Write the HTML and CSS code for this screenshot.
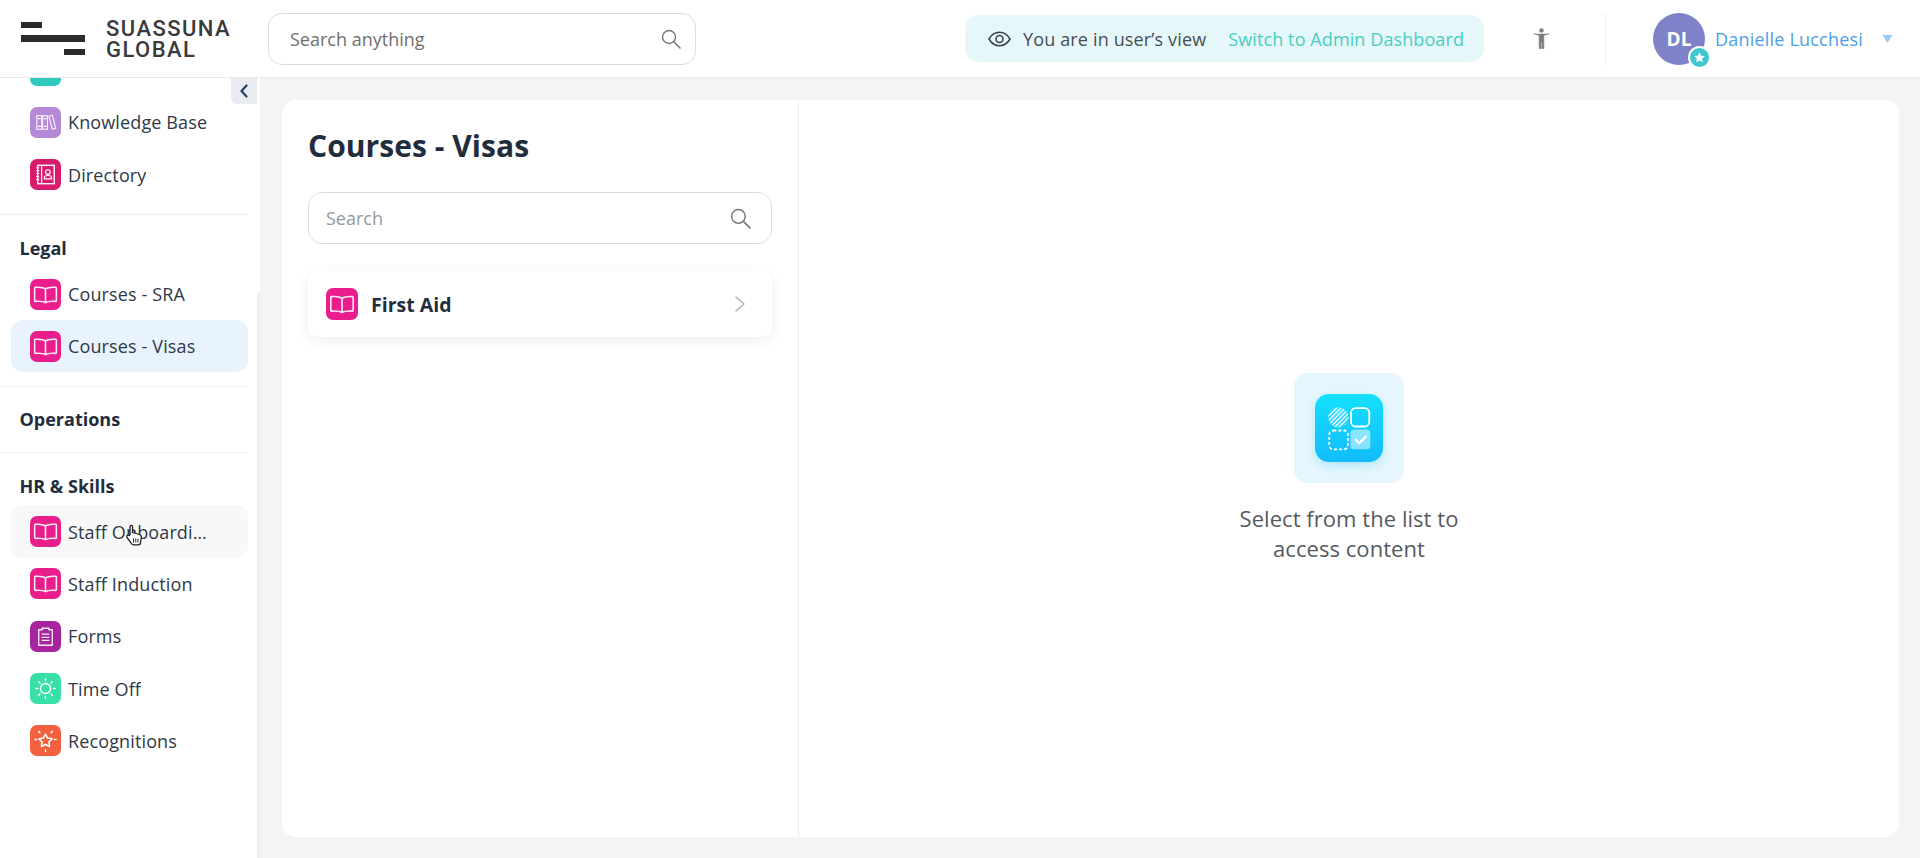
FILE: index.html
```html
<!DOCTYPE html>
<html lang="en">
<head>
<meta charset="utf-8">
<title>Courses - Visas</title>
<link rel="stylesheet" href="styles.css">
</head>
<body>
<svg class="defs" width="0" height="0" aria-hidden="true">
  <symbol id="book" viewBox="0 0 32 32">
    <path d="M16 10.300C14 8.900 10.500 8.300 5.600 8.600C5 8.650 4.800 9 4.800 9.500V22.300C4.800 22.800 5.100 23.100 5.600 23.100C10.500 22.800 13.800 23 16 24.500C18.200 23 21.500 22.800 26.400 23.100C26.900 23.100 27.200 22.800 27.200 22.300V9.500C27.200 9 27 8.650 26.400 8.600C21.500 8.300 18 8.900 16 10.300ZM16 10.300V24.500" fill="none" stroke="#fff" stroke-width="1.600" stroke-linejoin="round" opacity=".92"/>
  </symbol>
  <symbol id="search" viewBox="0 0 20 20">
    <circle cx="8" cy="8" r="6.500" fill="none" stroke="#777" stroke-width="1.400"/>
    <path d="M12.800 12.800L19 19" stroke="#777" stroke-width="1.600" stroke-linecap="round"/>
  </symbol>
</svg>
<div class="app">
  <header class="topbar">
    <div class="logo">
      <div class="logo-bars"><i class="bar bar-a"></i><i class="bar bar-b"></i><i class="bar bar-c"></i></div>
      <div class="logo-text">SUASSUNA<br>GLOBAL</div>
    </div>
    <div class="top-search">
      <span class="top-search-text">Search anything</span>
      <svg class="top-search-icon"><use href="#search"/></svg>
    </div>
    <div class="view-banner">
      <svg class="eye" viewBox="0 0 24 16"><path d="M1 8C4 3 7.500 1 12 1S20 3 23 8C20 13 16.500 15 12 15S4 13 1 8Z" fill="none" stroke="#3f4650" stroke-width="1.700"/><circle cx="12" cy="8" r="3.600" fill="none" stroke="#3f4650" stroke-width="1.700"/></svg>
      <span class="view-text">You are in user’s view</span>
      <span class="view-link">Switch to Admin Dashboard</span>
    </div>
    <svg class="a11y" viewBox="0 0 19 21"><circle cx="9.500" cy="2.400" r="2.200" fill="#7d7d7d"/><path d="M1.500 5.800L7.200 7.300V20.500H9V13.500H10V20.500H11.800V7.300L17.500 5.800" fill="#7d7d7d" stroke="#7d7d7d" stroke-width=".7" stroke-linejoin="round"/></svg>
    <div class="top-sep"></div>
    <div class="user">
      <div class="avatar">DL
        <span class="avatar-badge"><svg viewBox="0 0 16 16"><path d="M8 1.500L10 5.800L14.600 6.300L11.200 9.400L12.100 14L8 11.700L3.900 14L4.800 9.400L1.400 6.300L6 5.800Z" fill="#fff"/></svg></span>
      </div>
      <span class="user-name">Danielle Lucchesi</span>
      <svg class="caret" viewBox="0 0 10 8"><path d="M0 0H10L5 8Z" fill="#9cc9f2"/></svg>
    </div>
  </header>
  <div class="body">
    <aside class="sidebar">
      <div class="collapse"><svg viewBox="0 0 10 14"><path d="M7.500 1.500L2.500 7L7.500 12.500" fill="none" stroke="#1f4468" stroke-width="2.200" stroke-linecap="round" stroke-linejoin="round"/></svg></div>
      <div class="side-scroll">
        <div class="item"><span class="tile teal"></span></div>
        <div class="item"><span class="tile lilac"><svg viewBox="0 0 32 32"><g fill="none" stroke="#fff" stroke-width="1.200" opacity=".85"><rect x="7" y="9" width="5" height="14"/><rect x="13" y="9" width="5" height="14"/><path d="M19.500 9.500L23 8.500L26.500 22L23 23Z"/></g><path d="M8 12h3M14 12h3M8 20h3M14 20h3" stroke="#fff" stroke-width="1.500"/></svg></span><span class="label">Knowledge Base</span></div>
        <div class="item"><span class="tile crimson"><svg viewBox="0 0 32 32"><rect x="8" y="6.500" width="17" height="19" fill="none" stroke="#fff" stroke-width="1.400"/><path d="M12 6.500V25.500" stroke="#fff" stroke-width="1.200"/><path d="M6.500 9h3M6.500 12h3M6.500 15h3M6.500 18h3M6.500 21h3" stroke="#fff" stroke-width="1.100"/><circle cx="18.500" cy="13.500" r="2.400" fill="none" stroke="#fff" stroke-width="1.200"/><path d="M14.800 20.500V19C14.800 17.500 16 17 18.500 17S22.200 17.500 22.200 19V20.500Z" fill="none" stroke="#fff" stroke-width="1.200"/></svg></span><span class="label">Directory</span></div>
        <div class="divider first-divider"></div>
        <h3 class="section legal">Legal</h3>
        <div class="item"><span class="tile pink"><svg><use href="#book"/></svg></span><span class="label">Courses - SRA</span></div>
        <div class="item active"><span class="tile pink"><svg><use href="#book"/></svg></span><span class="label">Courses - Visas</span></div>
        <div class="divider legal-divider"></div>
        <h3 class="section operations">Operations</h3>
        <div class="divider"></div>
        <h3 class="section hr">HR &amp; Skills</h3>
        <div class="item hover"><span class="tile pink"><svg><use href="#book"/></svg></span><span class="label">Staff Onboarding</span>
          <svg class="cursor" viewBox="0 0 18 22"><path d="M5 11V2.800C5 1 7.500 1 7.500 2.800V8.500L14.500 10.500C16 11 16.500 12 16.300 13.500L15.500 19C15.300 20 14.500 20.800 13.500 20.800H8.500C7.700 20.800 7 20.400 6.600 19.700L2 13.500C1 12 2.800 10.300 4.200 11.500Z" fill="#fff" stroke="#222" stroke-width="1.300" stroke-linejoin="round"/><path d="M8.500 14.500V18.500M10.800 14.500V18.500M13 14.500V18.500" stroke="#222" stroke-width="1"/></svg>
        </div>
        <div class="item"><span class="tile pink"><svg><use href="#book"/></svg></span><span class="label">Staff Induction</span></div>
        <div class="item"><span class="tile purple"><svg viewBox="0 0 32 32"><path d="M9 9H12.500V7.500H19.500V9H23V25H9Z" fill="none" stroke="#fff" stroke-width="1.400" stroke-linejoin="round" opacity=".9"/><path d="M12 13.500H20M12 16.800H20M12 20H20" stroke="#fff" stroke-width="1.300" opacity=".9"/></svg></span><span class="label">Forms</span></div>
        <div class="item"><span class="tile mint"><svg viewBox="0 0 32 32"><circle cx="16" cy="16" r="5.200" fill="none" stroke="#fff" stroke-width="1.500"/><path d="M16 6V8M16 24V26M6 16H8M24 16H26M9 9L10.300 10.300M21.700 21.700L23 23M9 23L10.300 21.700M21.700 10.300L23 9" stroke="#fff" stroke-width="1.500" stroke-linecap="round"/></svg></span><span class="label">Time Off</span></div>
        <div class="item"><span class="tile coral"><svg viewBox="0 0 32 32"><path d="M16 9.500L18.200 13.500L22.700 14.300L19.500 17.600L20.200 22.200L16 20.200L11.800 22.200L12.500 17.600L9.300 14.300L13.800 13.500Z" fill="none" stroke="#fff" stroke-width="1.600" stroke-linejoin="round"/><path d="M16 25.500V27.500M5 15H7M25 15H27M9 6.500L10.200 8M23 6.500L21.800 8" stroke="#fff" stroke-width="1.400" stroke-linecap="round"/></svg></span><span class="label">Recognitions</span></div>
      </div>
      <div class="scroll-thumb"></div>
    </aside>
    <main class="main">
      <div class="card">
        <section class="list-col">
          <h1 class="title">Courses - Visas</h1>
          <div class="list-search">
            <span class="list-search-text">Search</span>
            <svg class="list-search-icon"><use href="#search"/></svg>
          </div>
          <div class="course">
            <span class="tile pink course-tile"><svg><use href="#book"/></svg></span>
            <span class="course-name">First Aid</span>
            <svg class="chevron" viewBox="0 0 10 16"><path d="M1 1L9 8L1 15" fill="none" stroke="#b5b5b5" stroke-width="1.500" stroke-linecap="round" stroke-linejoin="round"/></svg>
          </div>
        </section>
        <section class="content-col">
          <div class="empty-tile">
            <div class="empty-inner">
              <svg viewBox="0 0 67 67">
                <defs><pattern id="hatch" width="3" height="3" patternUnits="userSpaceOnUse" patternTransform="rotate(-45)"><rect width="3" height="1.700" fill="#fff" fill-opacity=".85"/></pattern></defs>
                <circle cx="23" cy="23" r="10" fill="url(#hatch)"/>
                <rect x="35.500" y="14" width="18" height="18" rx="4.500" fill="none" stroke="#fff" stroke-width="1.800"/>
                <rect x="14" y="36" width="18.500" height="18.500" rx="4" fill="none" stroke="#fff" stroke-width="1.800" stroke-dasharray="3 2"/>
                <rect x="35" y="35" width="19.500" height="19.500" rx="3.500" fill="#fff" fill-opacity=".5"/>
                <path d="M40 45L43.500 48.500L50 42" fill="none" stroke="#fff" stroke-width="2.200" stroke-linecap="round" stroke-linejoin="round"/>
              </svg>
            </div>
          </div>
          <p class="empty-text">Select from the list to<br>access content</p>
        </section>
      </div>
    </main>
  </div>
</div>
</body>
</html>
```
FILE: styles.css
```css
* { box-sizing: border-box; }
html, body { margin: 0; height: 100%; }
body { font-family: "Open Sans", "Noto Sans", sans-serif; color: #2a3442; overflow: hidden; background: #f4f4f5; }
.defs { position: absolute; }
.app { display: flex; flex-direction: column; height: 858px; }

.topbar { display: flex; align-items: center; height: 78px; flex: none; background: #fff; border-bottom: 1px solid #e9e9ea; }
.logo { display: flex; align-items: center; margin-left: 21px; width: 247px; }
.logo-bars { display: flex; flex-direction: column; width: 64px; gap: 7px; }
.bar { display: block; height: 6.500px; background: #2b2b2d; }
.bar-a { width: 21px; }
.bar-b { width: 64px; }
.bar-c { width: 21px; align-self: flex-end; }
.logo-text { margin-left: 21px; font-family: Roboto, sans-serif; font-weight: 500; font-size: 22px; line-height: 21px; letter-spacing: 1.450px; color: #3a3a3c; }

.top-search { display: flex; align-items: center; justify-content: space-between; width: 428px; height: 52px; padding: 0 14px 0 21px; border: 1px solid #dcdcdc; border-radius: 14px; }
.top-search-text { font-size: 18px; color: #6f6f6f; }
.top-search-icon { width: 20px; height: 20px; }

.view-banner { display: flex; align-items: center; width: 519px; height: 47px; margin-left: 269px; padding-left: 23px; background: #e6f7fa; border-radius: 14px; }
.eye { width: 23px; height: 16px; flex: none; }
.view-text { margin-left: 12px; font-size: 18px; letter-spacing: .15px; color: #474d55; white-space: nowrap; }
.view-link { margin-left: 22px; font-size: 18px; letter-spacing: .1px; color: #45cfc3; white-space: nowrap; }
.a11y { width: 19px; height: 21px; margin-left: 48px; flex: none; }
.top-sep { width: 1px; height: 52px; margin-left: 54px; background: #eeeeee; }
.user { display: flex; align-items: center; margin-left: 47px; }
.avatar { position: relative; width: 52px; height: 52px; border-radius: 50%; background: #7e82c8; color: #fff; font-weight: 700; font-size: 19px; line-height: 52px; text-align: center; }
.avatar-badge { position: absolute; left: 35px; top: 33px; width: 23px; height: 23px; border-radius: 50%; background: #3fc6cf; border: 2px solid #fff; display: flex; align-items: center; justify-content: center; }
.avatar-badge svg { width: 13px; height: 13px; }
.user-name { margin-left: 10px; font-size: 18px; letter-spacing: .2px; color: #4c9fe6; white-space: nowrap; }
.caret { width: 11px; height: 8px; margin-left: 19px; }

.body { display: flex; flex: 1; min-height: 0; }
.sidebar { position: relative; width: 260px; flex: none; background: #fff; overflow: hidden; }
.side-scroll { margin-top: -34px; width: 257px; }
.collapse { position: absolute; z-index: 2; left: 231px; top: 0; width: 26px; height: 26px; background: #e8ecf1; border-bottom-left-radius: 6px; display: flex; align-items: center; justify-content: center; }
.collapse svg { width: 10px; height: 14px; }
.scroll-thumb { position: absolute; left: 257px; top: 215px; bottom: 0; width: 3px; background: #efefef; }

.item { position: relative; display: flex; align-items: center; width: 237px; height: 52.300px; margin-left: 11px; padding: 0 38px 0 19px; border-radius: 12px; }
.item.active { background: #e8f3fd; }
.item.hover { background: #f8f8f9; }
.tile { display: block; flex: none; width: 31px; height: 31px; border-radius: 7px; }
.tile svg { display: block; width: 100%; height: 100%; }
.teal { background: #2fcabd; }
.lilac { background: #b48ad6; }
.crimson { background: #d81b6d; }
.pink { background: #e91e8c; }
.purple { background: #a8249f; }
.mint { background: #38dfa6; }
.coral { background: #f2603d; }
.label { margin-left: 7px; font-size: 18px; letter-spacing: .13px; color: #2f3947; white-space: nowrap; overflow: hidden; text-overflow: ellipsis; min-width: 0; }
.cursor { position: absolute; left: 114px; top: 19px; width: 18px; height: 22px; }

.divider { width: 248px; height: 1px; background: #eeeeef; }
.first-divider { margin-top: 13px; }
.legal-divider { margin-top: 14px; }
.section { margin: 0 0 0 19.500px; font-size: 18px; font-weight: 700; line-height: 26px; color: #1f2d3d; }
.legal { padding-top: 20px; margin-bottom: 7px; }
.operations { padding-top: 19px; margin-bottom: 20px; }
.hr { padding-top: 20px; margin-bottom: 6px; }

.main { flex: 1; min-width: 0; padding: 22px 21px 21px 22px; }
.card { display: flex; height: 100%; background: #fff; border-radius: 14px; }
.list-col { width: 517px; flex: none; padding: 26px 26px 0; border-right: 1px solid #efefef; }
.title { margin: 0 0 26px; font-size: 30px; line-height: 40px; font-weight: 700; letter-spacing: .05px; color: #1f2d3d; }
.list-search { display: flex; align-items: center; justify-content: space-between; height: 52px; padding: 0 20px 0 17px; border: 1px solid #dcdcdc; border-radius: 14px; }
.list-search-text { font-size: 18px; color: #96999e; }
.list-search-icon { width: 21px; height: 21px; }
.course { display: flex; align-items: center; height: 66px; margin-top: 27px; padding: 0 27px 0 18px; background: #fff; border-radius: 10px; box-shadow: 0 3px 14px rgba(0, 0, 0, .07); }
.course-tile { width: 32px; height: 32px; }
.course-name { margin-left: 13px; flex: 1; font-size: 19.500px; font-weight: 700; color: #1f2d3d; }
.chevron { width: 10px; height: 16px; }

.content-col { flex: 1; display: flex; flex-direction: column; align-items: center; padding-top: 273px; }
.empty-tile { display: flex; align-items: center; justify-content: center; width: 110px; height: 110px; background: #e6f6fd; border-radius: 14px; }
.empty-inner { width: 68px; height: 68px; border-radius: 14px; background: linear-gradient(180deg, #14e0fb, #13bcfb); box-shadow: 0 4px 10px rgba(20, 190, 250, .25); }
.empty-inner svg { display: block; width: 100%; height: 100%; }
.empty-text { margin: 20px 0 0; font-size: 22px; line-height: 30px; letter-spacing: .05px; color: #565a5f; text-align: center; }
```
